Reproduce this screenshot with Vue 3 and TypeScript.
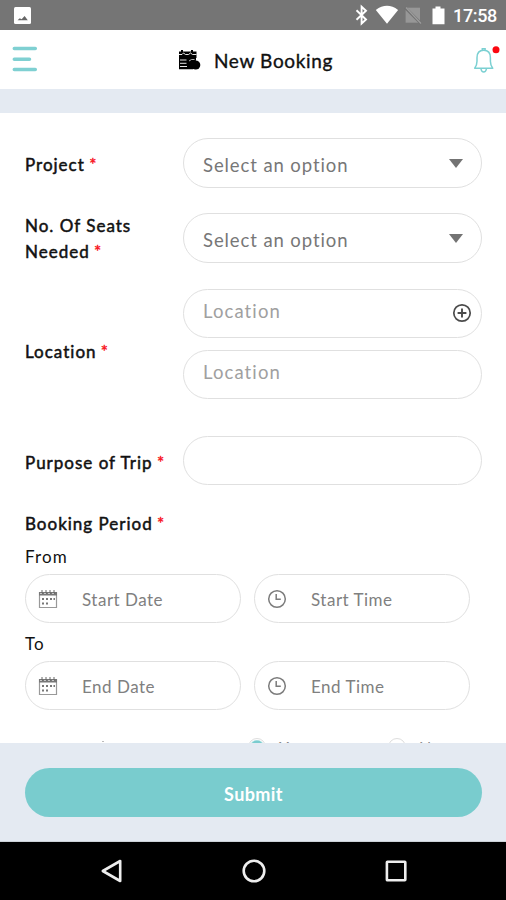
<script setup lang="ts">
import { ref } from 'vue'

interface PeriodRow {
  title: string
  date: string
  time: string
}

const periods: PeriodRow[] = [
  { title: 'From', date: 'Start Date', time: 'Start Time' },
  { title: 'To', date: 'End Date', time: 'End Time' },
]

const choices: string[] = ['Yes', 'No']
const selected = ref('Yes')
</script>

<template>
  <div class="screen">
    <div class="status">
      <svg class="photo" width="17" height="17" viewBox="0 0 17 17">
        <rect width="17" height="17" rx="1.5" fill="#fff" />
        <path d="M3.500 13.200l2.300-2 1.800 1 3-3.200 3.200 4.200z" fill="#666" />
      </svg>
      <svg width="152" height="30" viewBox="354 0 152 30">
        <path d="M356.500 10.300l9.500 9.200-4.400 4V6.700l4.400 4.100-9.500 9" fill="none" stroke="#fff" stroke-width="1.900" />
        <path d="M375.800 10q11.200-8.300 22.300 0L387 23.700z" fill="#fff" />
        <path d="M405.600 7.700h14.400v15h-14.400z" fill="#979797" />
        <path d="M405 7.500l16 16" stroke="#707070" stroke-width="2.800" />
        <path d="M406 7.500l15 16" stroke="#9c9c9c" stroke-width="1.300" />
        <path d="M435.500 6.500h5v2h4v15.800h-12V8.500h3z" fill="#fff" />
      </svg>
      <span class="clock">17:58</span>
    </div>

    <header class="header">
      <svg class="menu" width="26" height="27" viewBox="0 0 26 27">
        <path d="M2.300 2.600h21M2.300 13.300h15.200M2.300 23.600h21" stroke="#7fd0d2" stroke-width="3.500" stroke-linecap="round" />
      </svg>
      <div class="title">
        <svg width="23" height="21" viewBox="0 0 23 21">
          <path d="M1 2.500h2V1h2v1.500h8V1h2v1.500h3.500V9H18v2l-3 9.300H1z" fill="#000" />
          <circle cx="17.700" cy="16" r="4.600" fill="#000" />
          <path d="M1 5.500h3l1.500-1.500 2 1.500h3l2-1.500 2 1.500h4M2 11h6.500M2 14.300h6.500M2 17.500h7" fill="none" stroke="#fff" stroke-width=".9" />
          <path d="M11 12l2.500-1.500h3" fill="none" stroke="#ddd" stroke-width=".8" />
        </svg>
        <h1>New Booking</h1>
      </div>
      <svg class="bell" width="32" height="32" viewBox="0 0 32 32">
        <g fill="none" stroke="#7bd0d2" stroke-width="1.500">
          <path d="M4.700 24.300c1.500-2 2.300-3.600 2.300-7v-3.600C7 9 9.700 6.300 13.700 6.300s6.700 2.700 6.700 7.400v3.600c0 3.400.8 5 2.300 7z" stroke-linejoin="round" />
          <path d="M12.300 6v-1.300h2.800V6M11 25q.5 3 2.700 3t2.700-3" />
        </g>
        <circle cx="26" cy="5.700" r="3.500" fill="#fb0710" />
      </svg>
    </header>
    <div class="band"></div>

    <main class="form">
      <div class="row project">
        <label>Project <i>*</i></label>
        <div class="pill select">Select an option<span class="caret"></span></div>
      </div>
      <div class="row seats">
        <label>No. Of Seats<br />Needed <i>*</i></label>
        <div class="pill select">Select an option<span class="caret"></span></div>
      </div>
      <div class="row location">
        <label>Location <i>*</i></label>
        <div class="stack">
          <div class="pill place">
            <span>Location</span>
            <svg width="20" height="20" viewBox="0 0 20 20" fill="none" stroke="#4b4b4b">
              <circle cx="10" cy="10" r="8.200" stroke-width="1.700" />
              <path d="M10 5.600v8.800M5.600 10h8.800" stroke-width="1.900" />
            </svg>
          </div>
          <div class="pill place"><span>Location</span></div>
        </div>
      </div>
      <div class="row purpose">
        <label>Purpose of Trip <i>*</i></label>
        <div class="pill"></div>
      </div>

      <label class="period">Booking Period <i>*</i></label>
      <section v-for="p in periods" :key="p.title">
        <h2>{{ p.title }}</h2>
        <div class="pair">
          <div class="pill when">
            <svg width="20" height="20" viewBox="0 0 20 20">
              <path d="M1.500 3v15.500h17V3" fill="none" stroke="#999" stroke-width="1.200" />
              <path d="M1 3h18v3.500H1z" fill="#777" />
              <path d="M4 1v4M8 1v4M12 1v4M16 1v4" stroke="#666" stroke-width="1" />
              <path d="M2 4.500h16" stroke="#ddd" stroke-width=".8" stroke-dasharray="2 2" />
              <path d="M4 10h2m2 0h2m2 0h2m1.500 0h1.500M4 14.500h2m2 0h2" stroke="#777" stroke-width="1.800" />
            </svg>
            <span>{{ p.date }}</span>
          </div>
          <div class="pill when">
            <svg width="20" height="20" viewBox="0 0 20 20" fill="none" stroke="#7c7c7c">
              <circle cx="10" cy="10" r="8.300" stroke-width="1.500" />
              <path d="M9.200 5v5.300h4.600" stroke-width="1.500" />
            </svg>
            <span>{{ p.time }}</span>
          </div>
        </div>
      </section>

      <div class="choices">
        <span class="tick"></span>
        <div v-for="c in choices" :key="c" class="choice">
          <span class="radio" :class="{ on: selected === c }"></span>{{ c }}
        </div>
      </div>
    </main>

    <footer class="footer">
      <button type="button">Submit</button>
    </footer>

    <nav class="nav">
      <svg width="26" height="26" viewBox="0 0 26 26"><path d="M21.200 3v20L3.800 13z" /></svg>
      <svg width="26" height="26" viewBox="0 0 26 26"><circle cx="13" cy="13" r="10.300" /></svg>
      <svg width="26" height="26" viewBox="0 0 26 26"><rect x="3.900" y="3.800" width="18.400" height="18.400" rx=".5" /></svg>
    </nav>
  </div>
</template>

<style>
body {
  margin: 0;
  background: #fff;
}
</style>

<style scoped>
.screen {
  width: 506px;
  height: 900px;
  display: flex;
  flex-direction: column;
  overflow: hidden;
  font-family: Lato, "Liberation Sans", sans-serif;
  color: #111;
  background: #fff;
}
.screen * {
  box-sizing: border-box;
}
svg {
  display: block;
  flex: none;
}
.status {
  height: 30px;
  flex: none;
  display: flex;
  justify-content: space-between;
  background: #757575;
  position: relative;
}
.photo {
  margin: 7px 0 0 14px;
}
.clock {
  position: absolute;
  left: 453px;
  top: 5px;
  font: 500 18px/22px Roboto, sans-serif;
  letter-spacing: -0.35px;
  color: #fff;
}
.header {
  height: 59px;
  flex: none;
  display: flex;
  justify-content: space-between;
  align-items: center;
  padding-left: 12px;
}
.title {
  display: flex;
  align-items: center;
  gap: 13px;
  padding: 2px 0 0 3px;
}
.title svg {
  margin-top: -3px;
}
h1 {
  margin: 0;
  font-size: 19px;
  line-height: 24px;
  font-weight: 400;
  letter-spacing: 0.65px;
  -webkit-text-stroke: 0.35px #111;
}
.bell {
  margin-right: 4px;
}
.band {
  height: 24px;
  flex: none;
  background: #e4eaf2;
}
.form {
  height: 630px;
  flex: none;
  padding: 25px 24px 0 25px;
  overflow: hidden;
}
.row {
  display: grid;
  grid-template-columns: 158px 299px;
  align-items: center;
}
.project label {
  padding-top: 3px;
}
.seats {
  margin-top: 24px;
}
.seats label {
  position: relative;
  top: 1px;
}
.location {
  margin-top: 25px;
}
.location label {
  padding-top: 15px;
}
.purpose {
  margin-top: 37px;
}
.purpose label {
  padding-top: 4px;
}
label {
  font-size: 17px;
  line-height: 26px;
  font-weight: 400;
  letter-spacing: 1px;
  white-space: nowrap;
  -webkit-text-stroke: 0.5px #111;
}
label i {
  font-style: normal;
  margin-left: -1px;
  color: #f8101a;
  -webkit-text-stroke: 0.4px #f8101a;
}
.pill {
  height: 49px;
  border: 1.5px solid #e0e0e0;
  border-radius: 25px;
  display: flex;
  align-items: center;
}
.select {
  height: 50px;
  padding: 3px 18px 0 19px;
  justify-content: space-between;
  font-size: 18.5px;
  letter-spacing: 0.9px;
  color: #777;
}
.caret {
  border: 7px solid transparent;
  border-top: 9px solid #737373;
  border-bottom: 0;
  margin-top: -3px;
}
.stack {
  display: grid;
  gap: 12px;
}
.place {
  justify-content: space-between;
  padding: 0 9px 0 19px;
  font-size: 18.5px;
  letter-spacing: 1.1px;
  color: #a0a0a0;
}
.place span {
  margin-top: -5px;
}
.place svg {
  margin-top: -2px;
}
.period {
  display: block;
  height: 27px;
  padding-top: 1px;
  margin-top: 25px;
}
h2 {
  margin: 0;
  padding: 8px 0 5px;
  font-size: 17px;
  line-height: 25px;
  font-weight: 400;
  letter-spacing: 1.1px;
}
.period + section h2 {
  padding-top: 7px;
}
.pair {
  display: grid;
  grid-template-columns: 216px 216px;
  gap: 13px;
}
.when {
  padding-left: 12px;
  gap: 24px;
  font-size: 17px;
  letter-spacing: 0.5px;
  color: #808080;
}
.when span {
  padding-top: 1px;
}
.choices {
  display: grid;
  grid-template-columns: 223px 140px 1fr;
  margin-top: 27px;
  font-size: 16px;
  line-height: 20px;
  color: #888;
}
.tick {
  width: 2px;
  height: 1px;
  margin: 4px 0 0 77px;
  background: #bbb;
}
.choice {
  display: flex;
  align-items: center;
  gap: 13px;
}
.radio {
  width: 18px;
  height: 18px;
  border: 1px solid #ddd;
  border-radius: 50%;
}
.radio.on {
  background: radial-gradient(circle, #7acccf 6px, #fff 7.5px);
}
.footer {
  height: 99px;
  flex: none;
  padding: 25px 24px 24px 25px;
  background: #e4eaf2;
  border-bottom: 1px solid #ccd2d8;
}
button {
  display: block;
  width: 100%;
  height: 49px;
  border: 0;
  border-radius: 25px;
  background: #79ccce;
  color: #fff;
  font: 700 18px/24px Lato, sans-serif;
  letter-spacing: 0.4px;
  padding: 2px 0 0;
}
.nav {
  height: 58px;
  flex: none;
  display: flex;
  justify-content: center;
  align-items: center;
  gap: 116px;
  padding-left: 2px;
  background: #000;
}
.nav path,
.nav circle,
.nav rect {
  fill: none;
  stroke: #eee;
  stroke-width: 2.6;
  stroke-linejoin: round;
}
</style>
